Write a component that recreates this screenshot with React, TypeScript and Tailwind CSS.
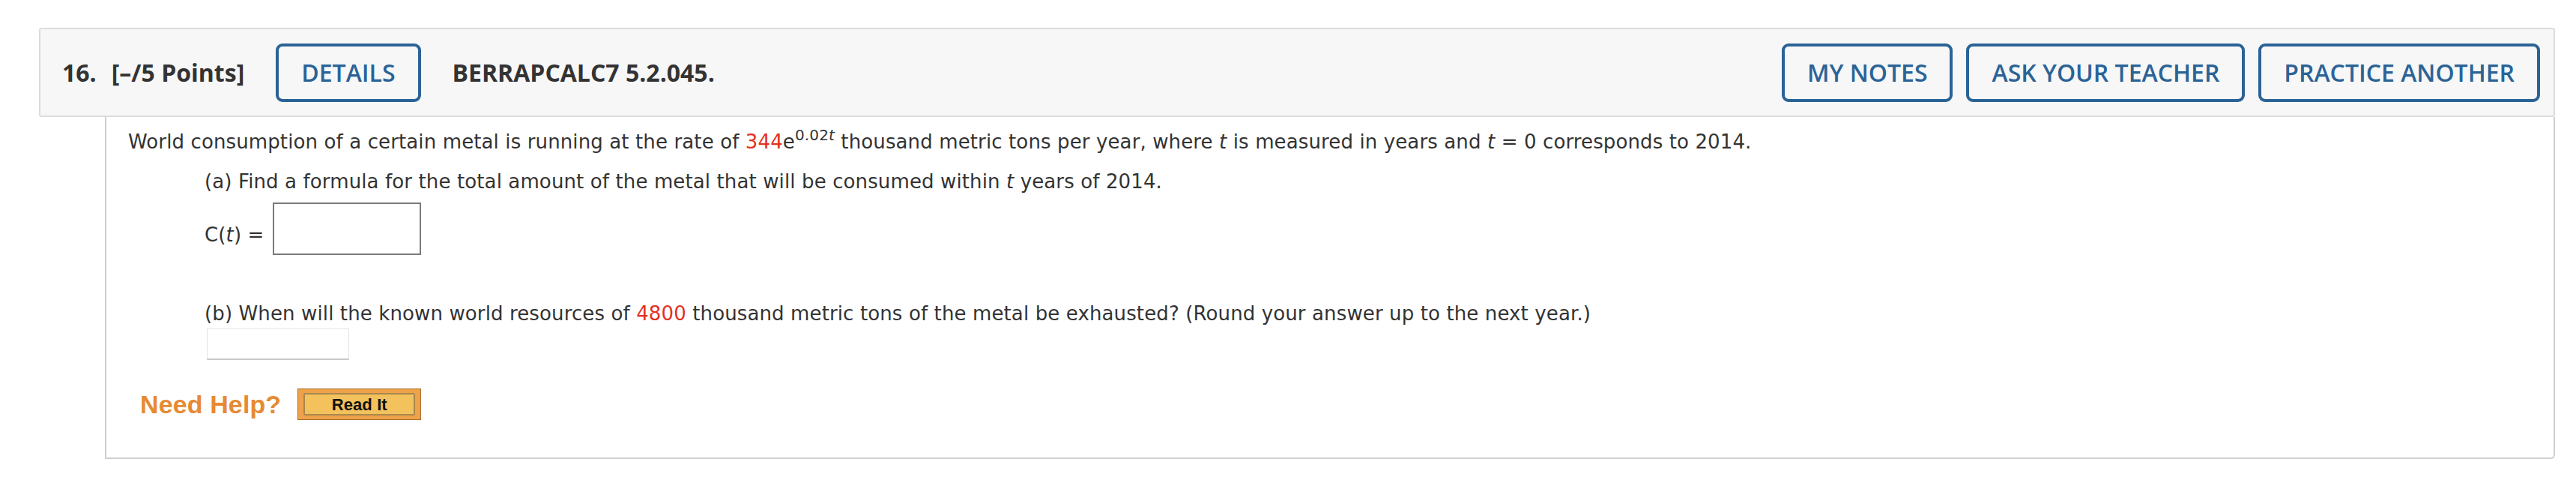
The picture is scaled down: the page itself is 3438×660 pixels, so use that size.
import React from 'react';

const headerFont = { fontFamily: '"Open Sans", "Liberation Sans", sans-serif' };
const bodyFont = { fontFamily: '"DejaVu Sans", Verdana, sans-serif' };
const arialFont = { fontFamily: '"Liberation Sans", Arial, sans-serif' };

const OutlineButton: React.FC<{ label: string; className?: string }> = ({ label, className = '' }) => (
  <button
    className={`h-[78px] px-[30px] flex items-center border-[4px] border-[#2b6396] rounded-[9px] bg-transparent text-[#2b6396] text-[32px] font-semibold ${className}`}
    style={headerFont}
  >
    {label}
  </button>
);

const Red: React.FC<{ children: React.ReactNode }> = ({ children }) => (
  <span className="text-[#e5301f]">{children}</span>
);

const T = () => <i>t</i>;

export default function App() {
  return (
    <div className="w-[3438px] h-[660px] bg-white pt-[37px] pl-[52px] pr-[28px]">
      {/* question header */}
      <div className="h-[119px] flex items-center justify-between border-2 border-[#dcdcdc] rounded-[3px] bg-[#f7f7f7] pl-[29px] pr-[18px]">
        <div className="flex items-center text-[#333] font-bold text-[32px]" style={headerFont}>
          <span>16.</span>
          <span className="ml-[20px]">[–/5 Points]</span>
          <OutlineButton label="DETAILS" className="mx-[42px]" />
          <span>BERRAPCALC7 5.2.045.</span>
        </div>
        <div className="flex items-center gap-[18px]">
          <OutlineButton label="MY NOTES" />
          <OutlineButton label="ASK YOUR TEACHER" />
          <OutlineButton label="PRACTICE ANOTHER" />
        </div>
      </div>

      {/* question body */}
      <div
        className="ml-[88px] border-x-2 border-b-2 border-[#cfcfcf] rounded-br-[6px] pl-[29px] pt-[14px] pb-[50px] text-[26px] leading-[39px] tracking-[0.12px] text-[#333]"
        style={bodyFont}
      >
        <p>
          World consumption of a certain metal is running at the rate of <Red>344</Red>e
          <span className="text-[20px] align-[11px] leading-none">
            0.02<T />
          </span>{' '}
          thousand metric tons per year, where <T /> is measured in years and <T /> = 0 corresponds to 2014.
        </p>

        <div className="pl-[102px]">
          <p className="mt-[14px]">
            (a) Find a formula for the total amount of the metal that will be consumed within <T /> years of 2014.
          </p>
          <div className="mt-[8px] flex items-end">
            <span className="mb-[7px]">
              C(<T />) =
            </span>
            <input
              type="text"
              className="ml-[12px] w-[198px] h-[70px] border-2 border-[#7a7a7a] bg-white outline-none"
            />
          </div>

          <p className="mt-[59px]">
            (b) When will the known world resources of <Red>4800</Red> thousand metric tons of the metal be exhausted?
            (Round your answer up to the next year.)
          </p>
          <input
            type="text"
            className="ml-[3px] block w-[190px] h-[42px] border border-[#e2e2e2] border-b-2 border-b-[#c9c9c9] bg-white outline-none"
          />
        </div>

        <div className="mt-[38px] ml-[16px] flex items-center">
          <span className="text-[34px] font-bold text-[#e68a33] leading-none" style={arialFont}>
            Need Help?
          </span>
          <button className="ml-[22px] w-[165px] h-[42px] border border-[#a76e2e] bg-[#eea24a] px-[7px] py-[5px] flex">
            <span
              className="flex-1 flex items-center justify-center border-2 border-[#a9874e] rounded-[2px] bg-[#f3c25d] text-[22px] font-bold text-[#111]"
              style={arialFont}
            >
              Read It
            </span>
          </button>
        </div>
      </div>
    </div>
  );
}
